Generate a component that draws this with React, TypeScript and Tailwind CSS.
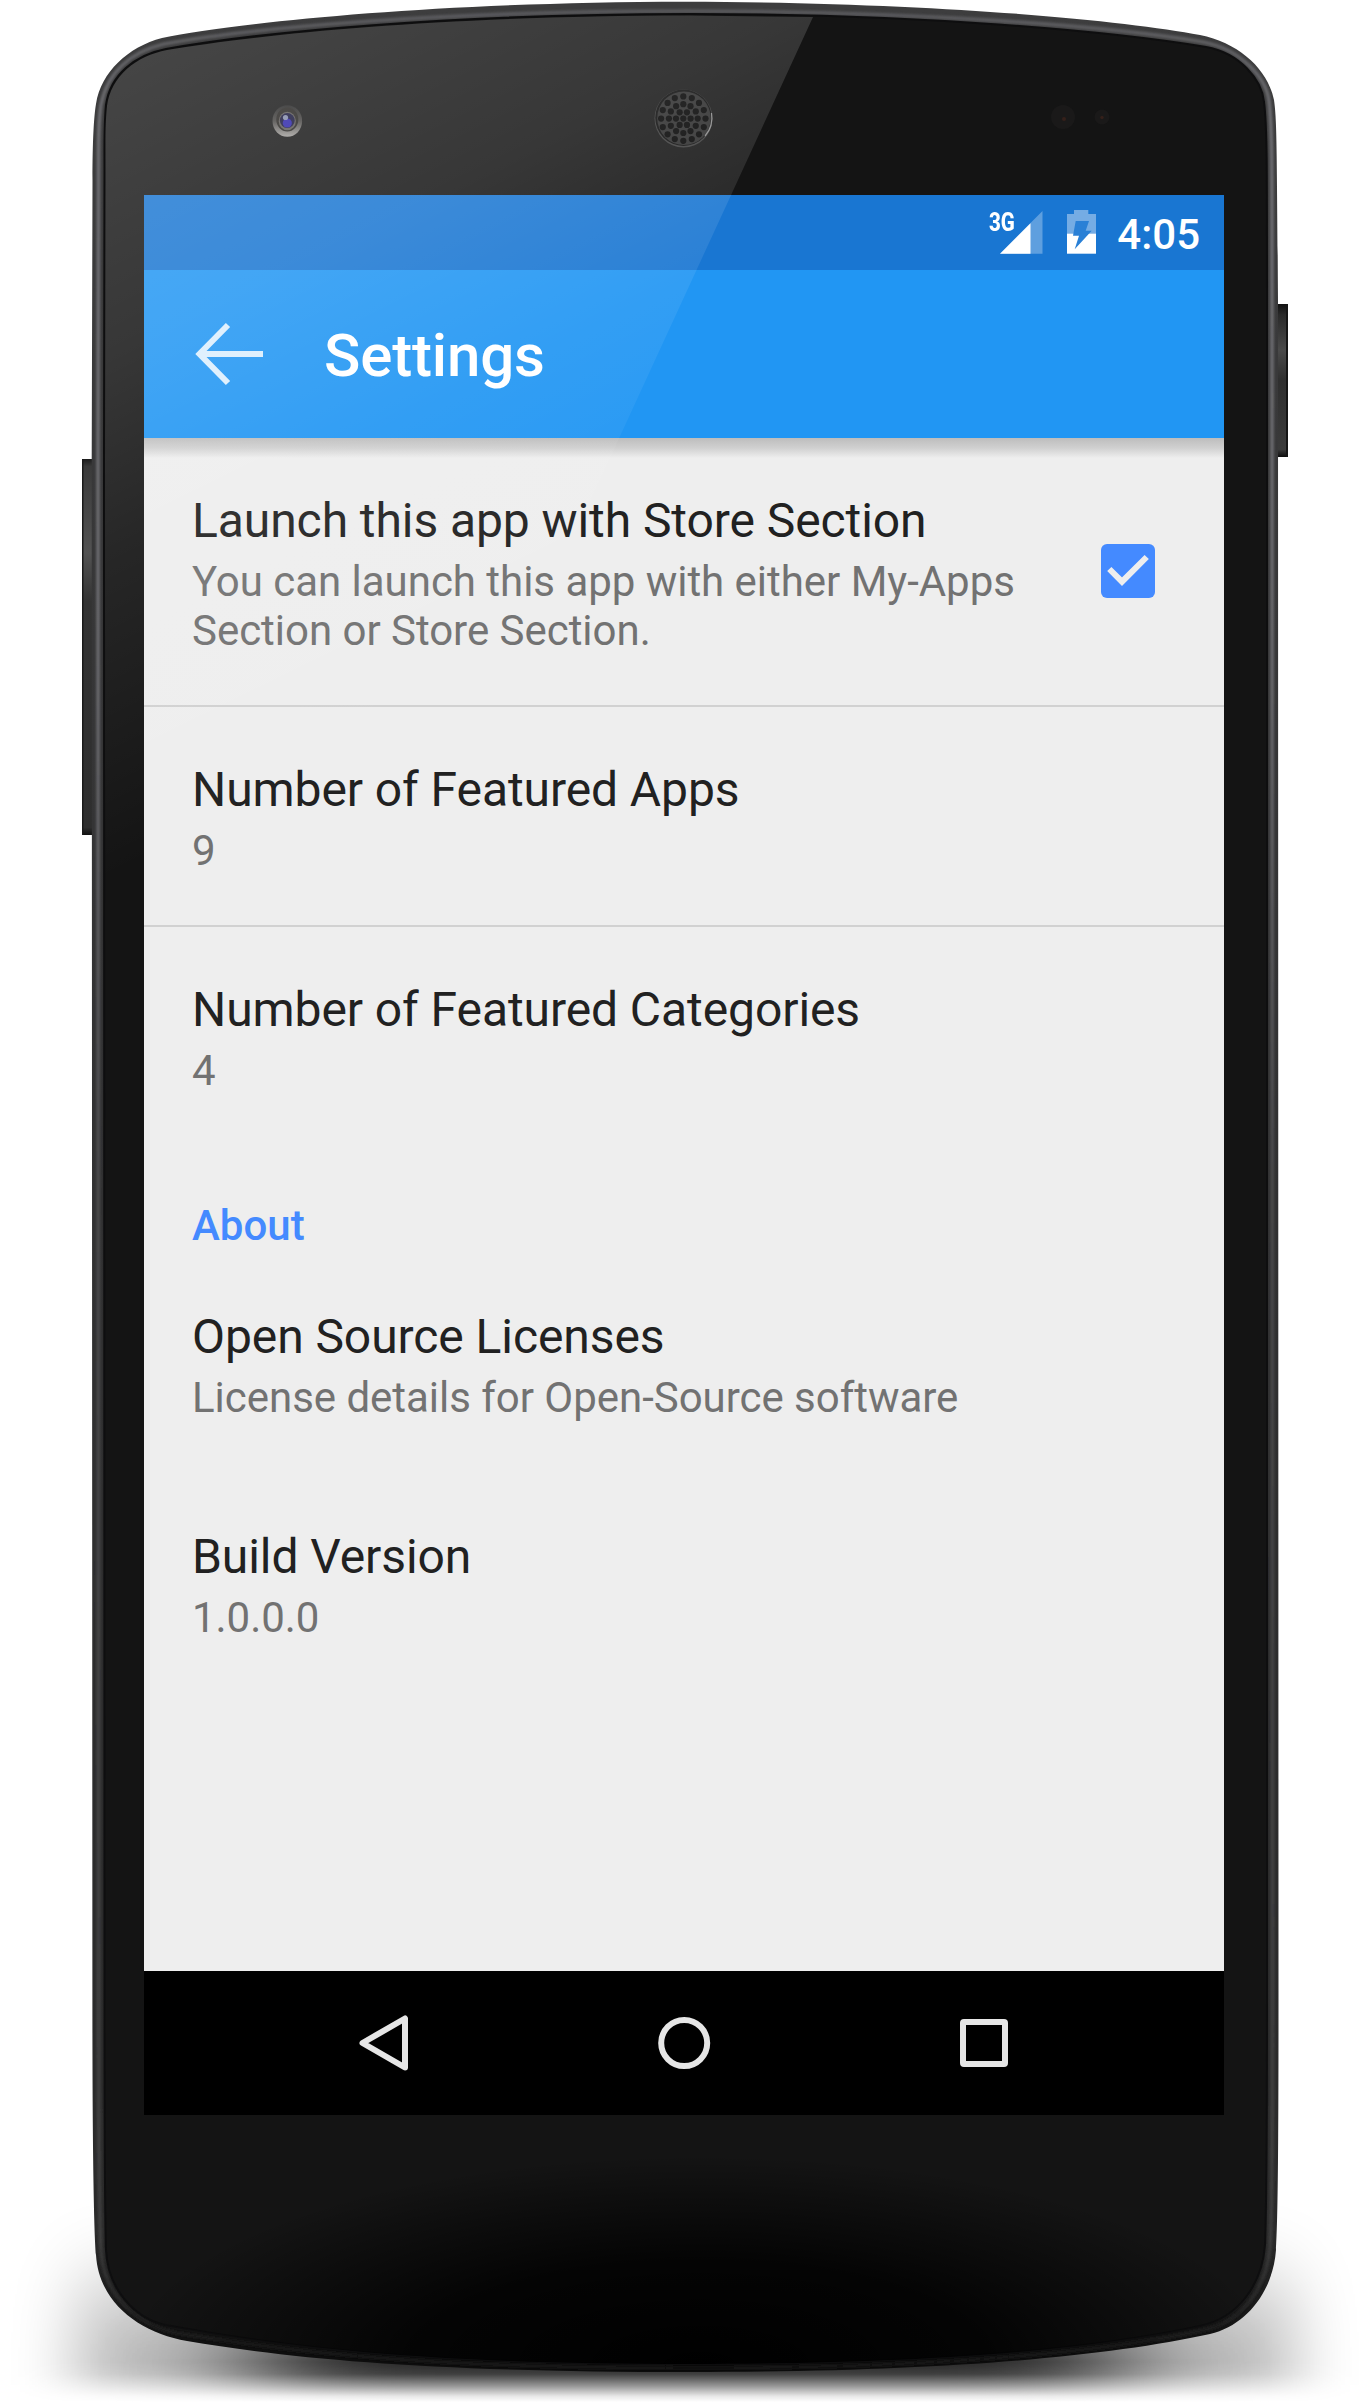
import React from "react";

const OUTER =
  "M92.5,180 C92.5,140 94,115 96,104 C101,72 128,47 162,38 C240,22 440,2 685,1.7 C930,2 1120,20 1200,35 C1240,43 1268,70 1274,100 C1277,120 1277,150 1278,300 L1278.5,2000 C1278.5,2150 1278,2220 1276,2250 C1273,2290 1248,2325 1210,2334 C1100,2358 930,2372 690,2372 C440,2372 300,2360 187,2341 C140,2333 99,2303 96,2255 C94,2230 92.4,2150 92.4,2000 L91.7,460 Z";
const MIDDLE =
  "M98,460 L98.5,180 C98.5,140 98.5,120 101,105 C107,73 130,52 164,44 C250,28 440,11 688,11 C925,11 1115,27 1203,42 C1240,49 1266,77 1269,101 C1272,125 1272,160 1272,300 L1272.5,2000 C1272.5,2150 1272,2220 1270,2248 C1266,2288 1243,2321 1205,2330 C1095,2354 930,2368 690,2368 C440,2368 300,2354 176,2333 C138,2325 104,2296 101,2252 C99,2220 98.5,2150 98.5,2000 Z";
const INNER =
  "M104,460 L104.5,170 C104.5,140 104,125 106,105 C110,75 135,55 166,49 C260,32 450,14 690,14 C920,14 1110,31 1206,47 C1240,53 1262,80 1264,102 C1267,125 1267,160 1267,300 L1267,2000 C1267,2150 1266,2220 1265,2245 C1262,2285 1238,2318 1200,2326 C1090,2350 930,2364 690,2364 C440,2364 300,2350 165,2325 C135,2318 108,2290 106,2250 C105,2220 104.5,2150 104.5,2000 Z";

const rings: Array<[number, number]> = [
  [1, 0],
  [6, 7.3],
  [12, 14.4],
  [16, 22.2],
];

function Speaker() {
  return (
    <g>
      <circle cx="683.5" cy="118.5" r="29" fill="#3c3c3c" />
      <circle cx="683.5" cy="117.8" r="28.2" fill="#0a0a0a" />
      <circle cx="684" cy="118.3" r="26.8" fill="#2c2c2c" />
      <path d="M705,136 A28 28 0 0 0 711.5,113" fill="none" stroke="#8a8a8a" strokeWidth="1.2" />
      {rings.map(([n, r]) =>
        Array.from({ length: n }, (_, i) => {
          const a = (i / n) * Math.PI * 2;
          return (
            <circle
              key={n + "-" + i}
              cx={683.3 + r * Math.cos(a)}
              cy={118.6 + r * Math.sin(a)}
              r="3.1"
              fill="#020202"
            />
          );
        })
      )}
    </g>
  );
}

function DeviceBody() {
  return (
    <svg className="absolute inset-0" width="1370" height="2405" viewBox="0 0 1370 2405" aria-hidden="true">
      <defs>
        <linearGradient id="rim" x1="0" y1="0" x2="0" y2="2405" gradientUnits="userSpaceOnUse">
          <stop offset="0" stopColor="#3d3d3e" />
          <stop offset="0.5" stopColor="#303031" />
          <stop offset="0.93" stopColor="#2a2a2a" />
          <stop offset="0.98" stopColor="#0d0d0d" />
        </linearGradient>
        <linearGradient id="shine" x1="0" y1="0" x2="0" y2="2405" gradientUnits="userSpaceOnUse">
          <stop offset="0" stopColor="#57575a" />
          <stop offset="0.05" stopColor="#6c6c70" />
          <stop offset="0.28" stopColor="#68686c" />
          <stop offset="0.5" stopColor="#48484a" />
          <stop offset="0.93" stopColor="#3e3e3e" />
          <stop offset="0.98" stopColor="#141414" />
        </linearGradient>
        <radialGradient id="foot" cx="0" cy="0" r="1" gradientUnits="userSpaceOnUse" gradientTransform="translate(700 2365) scale(580 210)">
          <stop offset="0" stopColor="#000" />
          <stop offset="0.5" stopColor="#000" stopOpacity="0.8" />
          <stop offset="1" stopColor="#000" stopOpacity="0" />
        </radialGradient>
        <linearGradient id="volume" x1="0" y1="0" x2="0" y2="1">
          <stop offset="0" stopColor="#1c1c1c" />
          <stop offset="0.02" stopColor="#3a3a3a" />
          <stop offset="0.25" stopColor="#525252" />
          <stop offset="0.38" stopColor="#333" />
          <stop offset="0.98" stopColor="#2e2e2e" />
          <stop offset="1" stopColor="#111" />
        </linearGradient>
        <linearGradient id="power" x1="0" y1="0" x2="0" y2="1">
          <stop offset="0" stopColor="#111" />
          <stop offset="0.07" stopColor="#2a2a2a" />
          <stop offset="0.3" stopColor="#4a4a4a" />
          <stop offset="0.5" stopColor="#2f2f2f" />
          <stop offset="0.95" stopColor="#3b3b3b" />
          <stop offset="1" stopColor="#0d0d0d" />
        </linearGradient>
        <linearGradient id="lens" x1="0" y1="0" x2="0" y2="1">
          <stop offset="0" stopColor="#222" />
          <stop offset="0.5" stopColor="#454341" />
          <stop offset="1" stopColor="#a09d9a" />
        </linearGradient>
        <linearGradient id="groundFade" x1="0" y1="2362" x2="0" y2="2402" gradientUnits="userSpaceOnUse">
          <stop offset="0" stopColor="#fff" />
          <stop offset="0.3" stopColor="#ddd" />
          <stop offset="0.6" stopColor="#777" />
          <stop offset="0.85" stopColor="#1c1c1c" />
          <stop offset="1" stopColor="#000" />
        </linearGradient>
        <mask id="ground" maskUnits="userSpaceOnUse" x="0" y="2100" width="1370" height="305">
          <rect x="0" y="2100" width="1370" height="305" fill="url(#groundFade)" />
        </mask>
        <filter id="deepShadow" filterUnits="userSpaceOnUse" x="-100" y="2000" width="1570" height="600">
          <feGaussianBlur stdDeviation="75 22" />
        </filter>
        <filter id="softShadow" filterUnits="userSpaceOnUse" x="-100" y="2000" width="1570" height="600">
          <feGaussianBlur stdDeviation="32 42" />
        </filter>
        <filter id="rimBlur" x="-5%" y="-5%" width="110%" height="110%">
          <feGaussianBlur stdDeviation="0.8" />
        </filter>
      </defs>

      <g mask="url(#ground)">
        <rect x="75" y="2285" width="1220" height="160" fill="#000" opacity="0.25" filter="url(#softShadow)" />
        <rect x="255" y="2330" width="860" height="140" fill="#000" opacity="0.84" filter="url(#deepShadow)" />
      </g>

      <rect x="82" y="459" width="14" height="376" fill="url(#volume)" />
      <rect x="82" y="459" width="1.5" height="376" fill="#1a1a1a" />
      <rect x="1274" y="304" width="14" height="153" fill="url(#power)" />
      <rect x="1286" y="304" width="2" height="153" fill="#161616" />

      <path d={OUTER} fill="url(#rim)" />
      <path d={MIDDLE} fill="none" stroke="url(#shine)" strokeWidth="3.6" filter="url(#rimBlur)" />
      <path d={INNER} fill="#141414" stroke="#0e0e0f" strokeWidth="2" />
      <path d={INNER} fill="url(#foot)" />
      <Speaker />

      <ellipse cx="287.3" cy="121" rx="14.8" ry="15.8" fill="url(#lens)" />
      <ellipse cx="287.3" cy="119.5" rx="11" ry="12" fill="#24221f" />
      <ellipse cx="287.3" cy="121" rx="8.6" ry="9.2" fill="#5a5754" />
      <circle cx="287.3" cy="120.5" r="7.4" fill="#15143a" />
      <circle cx="287.3" cy="123" r="4.6" fill="#2a22a8" />
      <circle cx="285.5" cy="117.5" r="2.6" fill="#8088a8" />

      <circle cx="1063" cy="117" r="12" fill="#1a1919" />
      <circle cx="1064" cy="119" r="2" fill="#35201a" />
      <circle cx="1102" cy="117" r="7.5" fill="#1a1919" />
      <circle cx="1102" cy="117.5" r="1.7" fill="#35201a" />
    </svg>
  );
}

function GlassReflection() {
  return (
    <svg className="pointer-events-none absolute inset-0" width="1370" height="2405" viewBox="0 0 1370 2405" aria-hidden="true">
      <defs>
        <linearGradient id="glare" x1="130" y1="60" x2="450" y2="712" gradientUnits="userSpaceOnUse">
          <stop offset="0" stopColor="#fff" stopOpacity="0.21" />
          <stop offset="0.35" stopColor="#fff" stopOpacity="0.15" />
          <stop offset="0.6" stopColor="#fff" stopOpacity="0.08" />
          <stop offset="1" stopColor="#fff" stopOpacity="0" />
        </linearGradient>
      </defs>
      <path
        d="M105,460 L105.5,170 C105.5,140 105,125 107,106 C111,76 136,56 167,50 C260,34 450,15.5 690,15.5 L813,17 L435,838 L105,1000 Z"
        fill="url(#glare)"
      />
    </svg>
  );
}

function StatusBar() {
  return (
    <div className="flex h-[75px] shrink-0 items-start bg-[#1976d2] pr-[24px] text-white">
      <div className="ml-auto flex items-start">
        <span className="mt-[12px] -ml-px w-[11px] origin-left scale-x-[0.79] text-[26px] leading-[30px] font-extrabold">3G</span>
        <svg width="43" height="43" viewBox="0 0 43 43" className="mt-[16px]">
          <path d="M0,42.7 L42.5,0 V42.7 Z" fill="#fff" opacity="0.3" />
          <path d="M0,42.7 L30.5,12.2 V42.7 Z" fill="#fff" />
        </svg>
        <svg width="29" height="44" viewBox="0 0 29 44" className="mt-[15px] ml-[24px]">
          <path d="M7,0 H21.3 V4 H29 V24 H0 V4 H7 Z" fill="#fff" opacity="0.4" />
          <path d="M0,23.7 H29 V43.7 H0 Z" fill="#fff" />
          <path d="M8.7,11 H22 L18.7,20.7 H24.7 L7.7,39.3 L12,25.7 H6 Z" fill="#2a80d6" />
        </svg>
        <span className="mt-[15px] ml-[21px] text-[42px] leading-[49px] font-medium">4:05</span>
      </div>
    </div>
  );
}

function Toolbar() {
  return (
    <div className="flex h-[168px] shrink-0 items-center bg-[#2196f3]">
      <svg width="72" height="72" viewBox="0 0 72 72" className="ml-[48px]" fill="none" stroke="#fff" strokeOpacity="0.84" strokeWidth="6">
        <path d="M36,7 L7.5,36 L36,65 M9,36 H71" />
      </svg>
      <h1 className="mt-[4px] ml-[60px] text-[60px] leading-[72px] font-medium tracking-[-0.15px] text-white">Settings</h1>
    </div>
  );
}

function Preference({ title, summary, checked, divider }: { title: string; summary: string; checked?: boolean; divider?: boolean }) {
  return (
    <div className={"flex items-center border-b-2 pl-[48px] " + (divider ? "border-[#d1d1d1]" : "border-transparent")}>
      <div className="w-[860px] pt-[55px] pb-[50px]">
        <div className="text-[48px] leading-[56px] tracking-[-0.08px] text-[#212121]">{title}</div>
        <div className="mt-[8px] text-[42px] leading-[49px] tracking-[-0.03px] text-[#727272]">{summary}</div>
      </div>
      {checked && (
        <svg width="54" height="54" viewBox="0 0 54 54" className="-mt-[2px] ml-[49px]">
          <rect width="54" height="54" rx="6" fill="#448aff" />
          <path d="M8.3,25 L21,37.7 L45.7,13" fill="none" stroke="#eee" strokeWidth="6" />
        </svg>
      )}
    </div>
  );
}

function NavBar() {
  return (
    <div className="flex h-[144px] shrink-0 items-center justify-center gap-[240px] bg-black">
      <svg width="60" height="60" viewBox="0 0 60 60" fill="none" stroke="#e6e6e6" strokeWidth="6" strokeLinejoin="round">
        <path d="M8.5,30 L51,5.5 V54.5 Z" />
      </svg>
      <svg width="60" height="60" viewBox="0 0 60 60" fill="none" stroke="#e6e6e6" strokeWidth="6">
        <circle cx="30.2" cy="30" r="23" />
      </svg>
      <svg width="60" height="60" viewBox="0 0 60 60" fill="none" stroke="#e6e6e6" strokeWidth="6">
        <rect x="9" y="9" width="42" height="42" rx="1" />
      </svg>
    </div>
  );
}

export default function App() {
  return (
    <div className="relative h-[2405px] w-[1370px] overflow-hidden bg-white pt-[195px] pl-[144px] font-['Roboto',sans-serif]">
      <DeviceBody />
      <main className="relative flex h-[1920px] w-[1080px] flex-col bg-[#eeeeee]">
        <StatusBar />
        <Toolbar />
        <div className="relative flex-1">
          <div className="absolute inset-x-0 top-0 h-[20px] bg-linear-to-b from-[#bdbdbd] via-[#d0d0d0] to-[#eeeeee]" />
          <Preference title="Launch this app with Store Section" summary="You can launch this app with either My-Apps Section or Store Section." checked divider />
          <Preference title="Number of Featured Apps" summary="9" divider />
          <Preference title="Number of Featured Categories" summary="4" />
          <h2 className="h-[107px] pt-[54px] pl-[48px] text-[42px] leading-[49px] font-medium text-[#448aff]">About</h2>
          <Preference title="Open Source Licenses" summary="License details for Open-Source software" />
          <Preference title="Build Version" summary="1.0.0.0" />
        </div>
        <NavBar />
      </main>
      <GlassReflection />
    </div>
  );
}
